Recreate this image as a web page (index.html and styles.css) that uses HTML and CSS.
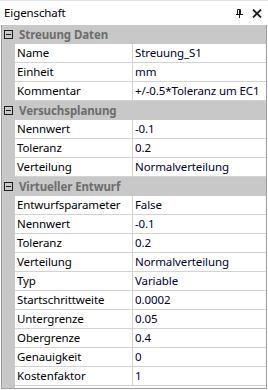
FILE: index.html
```html
<!DOCTYPE html>
<html lang="de">
<head>
    <meta charset="UTF-8">
    <title>Eigenschaft</title>
    <link rel="stylesheet" href="styles.css">
</head>
<body>
    <div class="panel">
        <div class="panel-header">
            <span class="panel-title">Eigenschaft</span>
            <div class="panel-buttons">
                <svg class="pin" width="7" height="9" viewBox="0 0 7 9">
                    <path d="M1.5 0.5h3v5h-3z M3.5 0.5v5" fill="none" stroke="#1e1e1e" stroke-width="1"/>
                    <path d="M0 5.5h7" stroke="#1e1e1e" stroke-width="1"/>
                    <path d="M3.5 6v3" stroke="#1e1e1e" stroke-width="1"/>
                </svg>
                <svg class="close" width="10" height="9" viewBox="0 0 10 9">
                    <path d="M1 0.5l8 8 M9 0.5l-8 8" stroke="#1e1e1e" stroke-width="1.8"/>
                </svg>
            </div>
        </div>
        <div class="grid">
            <div class="category"><span class="toggle"></span><span class="cat-label">Streuung Daten</span></div>
            <div class="row"><span class="gutter"></span><span class="name">Name</span><span class="value">Streuung_S1</span></div>
            <div class="row"><span class="gutter"></span><span class="name">Einheit</span><span class="value">mm</span></div>
            <div class="row"><span class="gutter"></span><span class="name">Kommentar</span><span class="value">+/-0.5*Toleranz um EC1</span></div>

            <div class="category"><span class="toggle"></span><span class="cat-label">Versuchsplanung</span></div>
            <div class="row"><span class="gutter"></span><span class="name">Nennwert</span><span class="value">-0.1</span></div>
            <div class="row"><span class="gutter"></span><span class="name">Toleranz</span><span class="value">0.2</span></div>
            <div class="row"><span class="gutter"></span><span class="name">Verteilung</span><span class="value">Normalverteilung</span></div>

            <div class="category"><span class="toggle"></span><span class="cat-label">Virtueller Entwurf</span></div>
            <div class="row"><span class="gutter"></span><span class="name">Entwurfsparameter</span><span class="value">False</span></div>
            <div class="row"><span class="gutter"></span><span class="name">Nennwert</span><span class="value">-0.1</span></div>
            <div class="row"><span class="gutter"></span><span class="name">Toleranz</span><span class="value">0.2</span></div>
            <div class="row"><span class="gutter"></span><span class="name">Verteilung</span><span class="value">Normalverteilung</span></div>
            <div class="row"><span class="gutter"></span><span class="name">Typ</span><span class="value">Variable</span></div>
            <div class="row"><span class="gutter"></span><span class="name">Startschrittweite</span><span class="value">0.0002</span></div>
            <div class="row"><span class="gutter"></span><span class="name">Untergrenze</span><span class="value">0.05</span></div>
            <div class="row"><span class="gutter"></span><span class="name">Obergrenze</span><span class="value">0.4</span></div>
            <div class="row"><span class="gutter"></span><span class="name">Genauigkeit</span><span class="value">0</span></div>
            <div class="row"><span class="gutter"></span><span class="name">Kostenfaktor</span><span class="value">1</span></div>
        </div>
    </div>
</body>
</html>
```

FILE: styles.css
```css
body {
    margin: 0;
    padding: 0;
    background-color: #ffffff;
    font-family: "Noto Sans", "Open Sans", sans-serif;
    font-size: 11.5px;
    letter-spacing: -0.1px;
    color: #000000;
}
.panel {
    width: 268px;
    height: 390px;
    display: flex;
    flex-direction: column;
    border-top: 1px solid #e3e3e3;
    box-sizing: border-box;
}
.panel-header {
    height: 24px;
    display: flex;
    align-items: center;
    justify-content: space-between;
    padding: 0 6px 0 4px;
    flex-shrink: 0;
}
.panel-title {
    line-height: 16px;
}
.panel-buttons {
    display: flex;
    align-items: center;
    gap: 9px;
}
.grid {
    margin: 0 1px 1px 1px;
    border: 1px solid #a0a0a0;
    border-top: none;
    flex: 1;
    display: flex;
    flex-direction: column;
    background: linear-gradient(to right, #c8c8c8 13px, #ffffff 13px);
}
.category {
    height: 18px;
    border-bottom: 1px solid #c8c8c8;
    background-color: #c8c8c8;
    display: flex;
    align-items: center;
}
.toggle {
    width: 7px;
    height: 7px;
    border: 1px solid #1e1e1e;
    margin: 0 6px 0 2px;
    position: relative;
    flex-shrink: 0;
}
.toggle::after {
    content: "";
    position: absolute;
    left: 1px;
    right: 1px;
    top: 3px;
    height: 1px;
    background-color: #1e1e1e;
}
.cat-label {
    font-weight: bold;
    color: #6d6d6d;
}
.row {
    display: grid;
    grid-template-columns: 13px 118px 1fr;
}
.gutter {
    background-color: #c8c8c8;
}
.name,
.value {
    line-height: 18px;
    border-bottom: 1px solid #d2d2d2;
    white-space: nowrap;
    overflow: hidden;
}
.name {
    padding-left: 2px;
    border-right: 1px solid #d2d2d2;
}
.value {
    padding-left: 2px;
    color: #000033;
}
```
